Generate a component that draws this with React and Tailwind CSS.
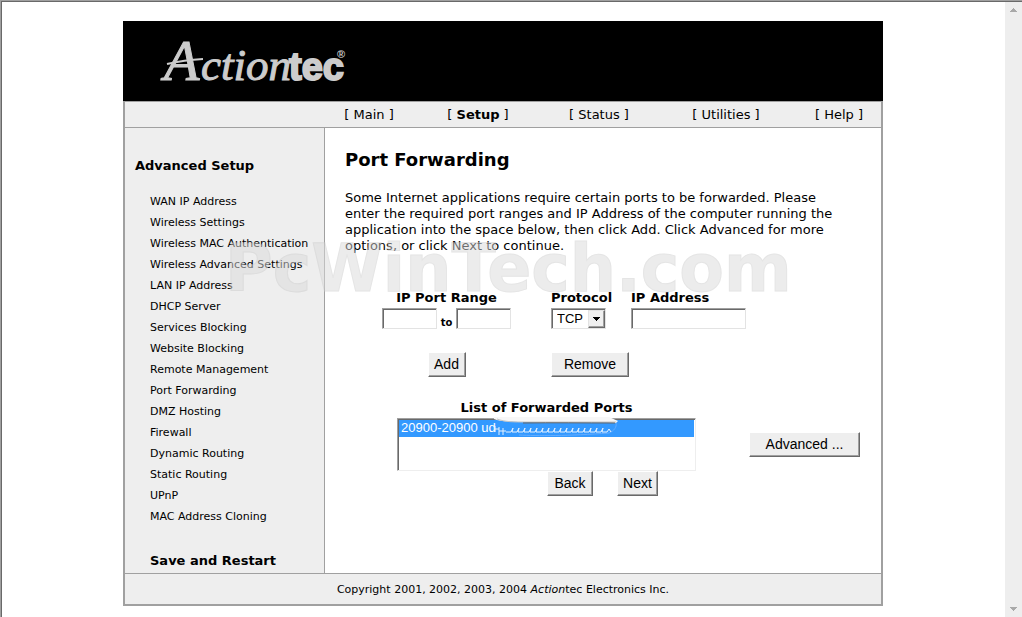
import { useState } from "react";
import clsx from "clsx";

const navItems = ["Main", "Setup", "Status", "Utilities", "Help"];

const sidebarLinks = [
  "WAN IP Address",
  "Wireless Settings",
  "Wireless MAC Authentication",
  "Wireless Advanced Settings",
  "LAN IP Address",
  "DHCP Server",
  "Services Blocking",
  "Website Blocking",
  "Remote Management",
  "Port Forwarding",
  "DMZ Hosting",
  "Firewall",
  "Dynamic Routing",
  "Static Routing",
  "UPnP",
  "MAC Address Cloning",
];

// Sunken 3D edge shared by the text boxes and lists
const sunken =
  "border border-t-[#a0a0a0] border-l-[#a0a0a0] border-r-[#e3e3e3] border-b-[#e3e3e3] shadow-[inset_1px_1px_0_#696969] bg-white rounded-none outline-none";

const FormButton = ({ children, className }) => (
  <button
    type="button"
    className={clsx(
      "h-[25px] border border-t-white border-l-white border-r-[#696969] border-b-[#696969] bg-[#eeeeee] pb-px font-['Liberation_Sans',Arial,sans-serif] text-[14px] leading-5 shadow-[inset_-1px_-1px_0_#a0a0a0]",
      className
    )}
  >
    {children}
  </button>
);

const Logo = () => (
  <svg className="overflow-visible" width="240" height="68" viewBox="0 0 240 68" fill="#cccccc" role="img" aria-label="Actiontec">
    <g fontFamily="'Liberation Serif', serif" fontStyle="italic" stroke="#cccccc" strokeWidth="1">
      <text x="6" y="48" fontSize="58">A</text>
      <text x="43" y="48" fontSize="45">ction</text>
    </g>
    <path d="M9 32Q26 28 45 27" fill="none" stroke="#cccccc" strokeWidth="2" />
    <g fontFamily="'Liberation Sans', Arial, sans-serif" fontWeight="bold">
      <text x="131" y="48" fontSize="38" stroke="#cccccc" strokeWidth="2">tec</text>
      <text x="179" y="26" fontSize="11">®</text>
    </g>
  </svg>
);

const NavBar = () => (
  <nav className="grid h-[27px] grid-cols-[200px_88fr_130fr_112fr_142fr_84fr] items-center border-y border-[#a0a0a0] bg-[#eeeeee] text-center">
    <span />
    {navItems.map((item) => (
      <a key={item} href="#" className="whitespace-nowrap">
        [ <span className={item === "Setup" ? "font-bold" : ""}>{item}</span> ]
      </a>
    ))}
  </nav>
);

const Sidebar = () => (
  <aside className="w-[200px] shrink-0 border-r border-[#a0a0a0] bg-[#eeeeee] pt-[30px] pb-1">
    <h2 className="pl-[10px] font-bold">Advanced Setup</h2>
    <ul className="mt-[17px] pl-[25px] text-[11px] leading-[21px]">
      {sidebarLinks.map((link) => (
        <li key={link}>
          <a href="#" className="whitespace-nowrap">{link}</a>
        </li>
      ))}
    </ul>
    <a href="#" className="mt-[26px] block pl-[25px] font-bold">Save and Restart</a>
  </aside>
);

const PortForm = () => {
  const [protocol, setProtocol] = useState("TCP");

  return (
    <div className="mt-9 ml-[37px] grid grid-cols-[129px_78px_1fr]">
      <fieldset>
        <legend className="w-full text-center font-bold">IP Port Range</legend>
        <div className="mt-[2px] flex justify-between">
          <input aria-label="First port" className={clsx(sunken, "h-[21px] w-[55px] px-1")} />
          <label htmlFor="port-end" className="self-end text-[10px] font-bold leading-3">to</label>
          <input id="port-end" className={clsx(sunken, "h-[21px] w-[55px] px-1")} />
        </div>
      </fieldset>

      <div className="col-start-2 pl-10">
        <label htmlFor="protocol" className="block font-bold">Protocol</label>
        <div className="relative mt-[2px] w-[55px]">
          <select
            id="protocol"
            value={protocol}
            onChange={(e) => setProtocol(e.target.value)}
            className={clsx(sunken, "block h-[21px] w-full appearance-none pl-[5px] font-['Liberation_Sans',Arial,sans-serif] text-[13px] leading-[18px]")}
          >
            <option>TCP</option>
            <option>UDP</option>
          </select>
          <span className="pointer-events-none absolute top-[2px] right-px flex h-[18px] w-[17px] items-center justify-center border border-t-[#e3e3e3] border-l-[#e3e3e3] border-r-[#696969] border-b-[#696969] bg-[#f0f0f0] shadow-[inset_-1px_-1px_0_#a0a0a0]">
            <svg width="7" height="4" viewBox="0 0 7 4" shapeRendering="crispEdges">
              <path d="M0 0h7v1H6v1H5v1H4v1H3V3H2V2H1V1H0z" />
            </svg>
          </span>
        </div>
      </div>

      <div className="pl-[42px]">
        <label htmlFor="ip-address" className="block font-bold">IP Address</label>
        <input id="ip-address" className={clsx(sunken, "mt-[2px] block h-[21px] w-[115px] px-1")} />
      </div>

      <FormButton className="mt-[23px] w-[38px] justify-self-center">Add</FormButton>
      <FormButton className="mt-[23px] ml-10 w-[78px]">Remove</FormButton>
    </div>
  );
};

// Smear that hides the address part of the entry
const Smudge = () => (
  <svg className="pointer-events-none absolute -top-px left-[96px]" width="126" height="20" viewBox="0 0 126 20" fill="none">
    <path d="M1 0H116l9 4-2 2C104 5 60 6 30 5 16 5 6 4 1 2z" fill="#f7f7f7" />
    <path d="M4 2C12 5 20 5 34 5h89" stroke="#c4c4c4" strokeWidth="1" />
    <path d="M30 6C60 5.500 90 6 122 6" stroke="#666666" strokeWidth="1" />
    <path d="M26 18c18 1 50 1 90-2 5-2 8-6 7-10" stroke="#62acff" strokeWidth="1" />
    <path d="M2 9v6M2 12h4M6 10v8M10 11v7M6 14h7" stroke="#e4f1ff" strokeWidth="1" />
    <path
      d="M13 15h5l2-4-1 4h5l2-4-1 4h5l2-4-1 4h5l2-4-1 4h5l2-4-1 4h5l2-4-1 4h5l2-4-1 4h5l2-4-1 4h5l2-4-1 4h5l2-4-1 4h5l2-4-1 4h5l2-4-1 4h5l2-4-1 4h5l2-4-1 4h5l2-4-1 4h5l2-4-1 4h5l2-3 2 3"
      stroke="#e4f1ff"
      strokeWidth="1"
    />
  </svg>
);

const ForwardedPorts = () => (
  <div className="mt-[23px] ml-[52px] grid grid-cols-[299px_1fr]">
    <label htmlFor="ports" className="text-center font-bold">List of Forwarded Ports</label>
    <div className="relative col-start-1 mt-[2px]">
      <select
        id="ports"
        size={3}
        defaultValue="20900"
        className={clsx(
          sunken,
          "block h-[53px] w-full overflow-hidden border-r-[#eeeeee] border-b-[#eeeeee] p-px font-['Liberation_Sans',Arial,sans-serif] text-[13px]"
        )}
      >
        <option value="20900" className="h-[17px] bg-[linear-gradient(#3399ff,#3399ff)] px-[2px] py-0 leading-[17px] text-white!">
          20900-20900 ud
        </option>
      </select>
      <Smudge />
    </div>
    <div className="mt-4 pl-[53px]">
      <FormButton className="w-[111px]">Advanced ...</FormButton>
    </div>
    <div className="col-start-1 flex gap-6 pl-[150px]">
      <FormButton className="w-[46px]">Back</FormButton>
      <FormButton className="w-[41px]">Next</FormButton>
    </div>
  </div>
);

// Greyed window scrollbar, nothing to scroll
const ScrollBar = () => (
  <div className="flex w-[17px] shrink-0 flex-col items-center justify-between bg-[#eeeeee] pt-[6px] pb-[6px]">
    <svg width="7" height="4" viewBox="0 0 7 4" fill="#a9a9a9" shapeRendering="crispEdges">
      <path d="M3 0h1v1h1v1h1v1h1v1H0V3h1V2h1V1h1z" />
    </svg>
    <svg width="7" height="4" viewBox="0 0 7 4" fill="#a9a9a9" shapeRendering="crispEdges">
      <path d="M0 0h7v1H6v1H5v1H4v1H3V3H2V2H1V1H0z" />
    </svg>
  </div>
);

export default function App() {
  return (
    <div className="min-h-screen border-t border-l border-[#a0a0a0] bg-white">
      <div className="flex min-h-[calc(100vh-1px)] border-t border-l border-[#696969] font-['DejaVu_Sans',Verdana,sans-serif] text-[13px] leading-4 text-black">
        <div className="flex-1 pt-[19px] pr-px">
          <div className="relative mx-auto max-w-[760px]">
            <header className="h-20 bg-black pt-[11px] pl-[35px]">
              <Logo />
            </header>

            <div className="border-x-2 border-b-2 border-[#a0a0a0]">
              <NavBar />
              <div className="flex">
                <Sidebar />
                <main className="flex-1 pt-5 pl-5">
                  <h1 className="text-[18px] font-bold leading-6">Port Forwarding</h1>
                  <p className="mt-[18px] max-w-[505px]">
                    Some Internet applications require certain ports to be forwarded. Please enter the
                    required port ranges and IP Address of the computer running the application into the
                    space below, then click Add. Click Advanced for more options, or click Next to continue.
                  </p>
                  <PortForm />
                  <ForwardedPorts />
                </main>
              </div>
              <footer className="border-t border-[#a0a0a0] bg-[#eeeeee] pt-2 pb-[6px] text-center text-[11px]">
                Copyright 2001, 2002, 2003, 2004 <i>Action</i>tec Electronics Inc.
              </footer>
            </div>

            <div className="pointer-events-none absolute top-[216px] left-[102px] text-[65px] font-bold leading-[64px] text-[#dbdbdb] opacity-50 [-webkit-text-stroke:1px_#cccccc]">
              PcWinTech.com
            </div>
          </div>
        </div>
        <ScrollBar />
      </div>
    </div>
  );
}
